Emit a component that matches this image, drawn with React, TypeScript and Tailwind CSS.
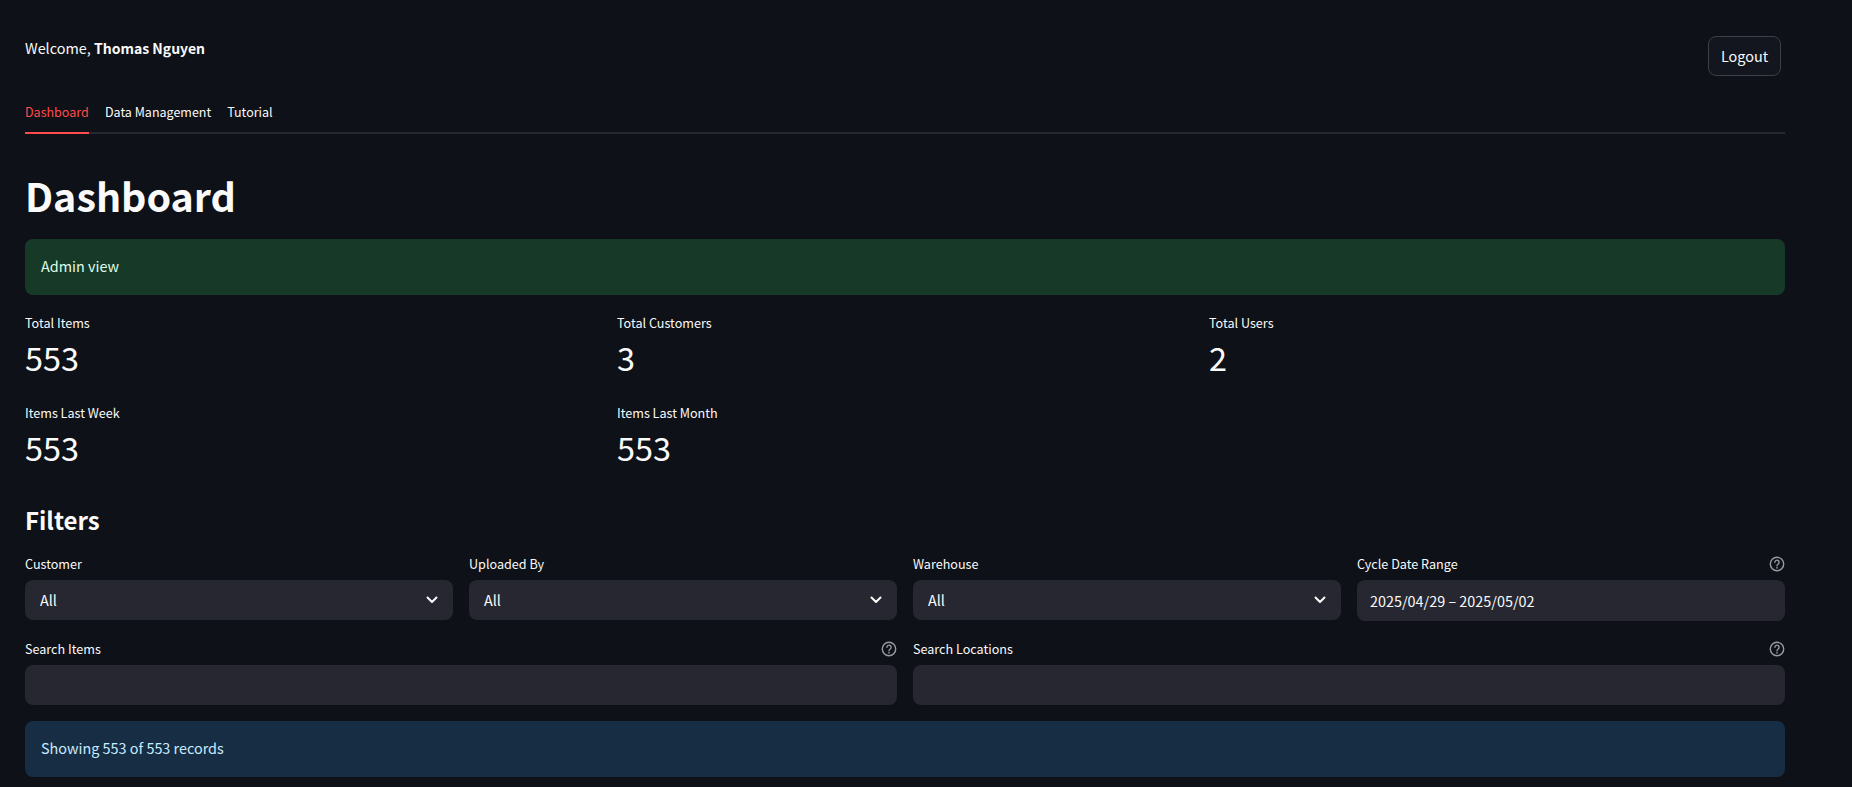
function Help() {
  return (
    <svg width="16" height="16" viewBox="0 0 16 16" fill="none" className="text-[#9a9ba1]">
      <circle cx="8" cy="8" r="6.7" stroke="currentColor" strokeWidth="1.4" />
      <path d="M5.9 6.3a2.1 2.1 0 1 1 3.3 1.7c-.7.5-1.2.9-1.2 1.8" stroke="currentColor" strokeWidth="1.4" strokeLinecap="round" />
      <circle cx="8" cy="11.8" r="0.85" fill="currentColor" />
    </svg>
  );
}

function Chevron() {
  return (
    <svg width="12" height="8" viewBox="0 0 12 8" fill="none">
      <path d="M1.5 1.5 6 6l4.5-4.5" stroke="#fafafa" strokeWidth="2" strokeLinecap="round" strokeLinejoin="round" />
    </svg>
  );
}

function FieldLabel({ label, help }: { label: string; help?: boolean }) {
  return (
    <div className="flex h-[20px] items-center justify-between text-[12.6px] leading-[20px] text-[#fafafa]">
      <span>{label}</span>
      {help && <Help />}
    </div>
  );
}

function Select({ label }: { label: string }) {
  return (
    <div className="flex flex-col gap-[6px]">
      <FieldLabel label={label} />
      <div className="flex h-[40px] items-center justify-between rounded-lg bg-[#262730] pl-[15px] pr-[15px] text-[14.4px] text-[#fafafa]">
        <span>All</span>
        <Chevron />
      </div>
    </div>
  );
}

function Input({ label, value, tall }: { label: string; value?: string; tall?: boolean }) {
  return (
    <div className="flex flex-col gap-[6px]">
      <FieldLabel label={label} help />
      <div className={tall ? "flex h-[41px] items-center rounded-lg bg-[#262730] px-[13px] text-[14.4px] text-[#fafafa]" : "flex h-[40px] items-center rounded-lg bg-[#262730] px-[13px] text-[14.4px] text-[#fafafa]"}>{value}</div>
    </div>
  );
}

function Metric({ label, value }: { label: string; value: string }) {
  return (
    <div className="flex flex-col">
      <div className="h-[20px] text-[12.6px] leading-[20px] text-[#fafafa]">{label}</div>
      <div className="h-[52px] text-[32.4px] leading-[48px] text-[#fafafa]">{value}</div>
    </div>
  );
}

export default function App() {
  return (
    <div
      className="h-[787px] overflow-hidden bg-[#0e1117] pl-[25px] pr-[67px] text-[14.4px] leading-[24px] text-[#fafafa]"
      style={{ fontFamily: '"Noto Sans CJK JP", "Noto Sans", sans-serif' }}
    >
      <div className="flex h-[88px] items-start justify-between pr-[4px]">
        <div className="mt-[36px] leading-[24px]">
          Welcome, <span className="text-[14px] font-bold">Thomas Nguyen</span>
        </div>
        <button className="mt-[36px] h-[40px] w-[73px] rounded-lg border border-[#3d3f48] bg-[#13161e] text-[14.4px] text-[#fafafa]">Logout</button>
      </div>

      <div className="flex h-[46px] gap-[16px] border-b-2 border-[#262730] text-[12.5px] leading-[20px]">
        <div className="-mb-[2px] flex h-[46px] w-[64px] items-center border-b-2 border-[#ff4b4b] pt-[4px] text-[#ff4b4b]">Dashboard</div>
        <div className="flex h-[44px] items-center pt-[4px]">Data Management</div>
        <div className="flex h-[44px] items-center pt-[4px]">Tutorial</div>
      </div>

      <h1 className="mt-[38px] h-[46px] text-[39.4px] font-bold leading-[46px]">Dashboard</h1>

      <div className="mt-[21px] flex h-[56px] items-center rounded-lg bg-[#173928] px-[16px] pb-[2px] text-[#dffde9]">Admin view</div>

      <div className="mt-[18px] grid grid-cols-3 gap-x-[16px] gap-y-[18px]">
        <Metric label="Total Items" value="553" />
        <Metric label="Total Customers" value="3" />
        <Metric label="Total Users" value="2" />
        <Metric label="Items Last Week" value="553" />
        <Metric label="Items Last Month" value="553" />
      </div>

      <h2 className="mt-[25px] h-[40px] text-[24px] font-bold leading-[40px]">Filters</h2>

      <div className="mt-[14px] grid grid-cols-4 gap-x-[16px]">
        <Select label="Customer" />
        <Select label="Uploaded By" />
        <Select label="Warehouse" />
        <Input label="Cycle Date Range" value="2025/04/29 – 2025/05/02" tall />
      </div>

      <div className="mt-[18px] grid grid-cols-2 gap-x-[16px]">
        <Input label="Search Items" />
        <Input label="Search Locations" />
      </div>

      <div className="mt-[16px] flex h-[56px] items-center rounded-lg bg-[#172d43] px-[16px] pb-[2px] text-[#c7ebff]">Showing 553 of 553 records</div>
    </div>
  );
}
